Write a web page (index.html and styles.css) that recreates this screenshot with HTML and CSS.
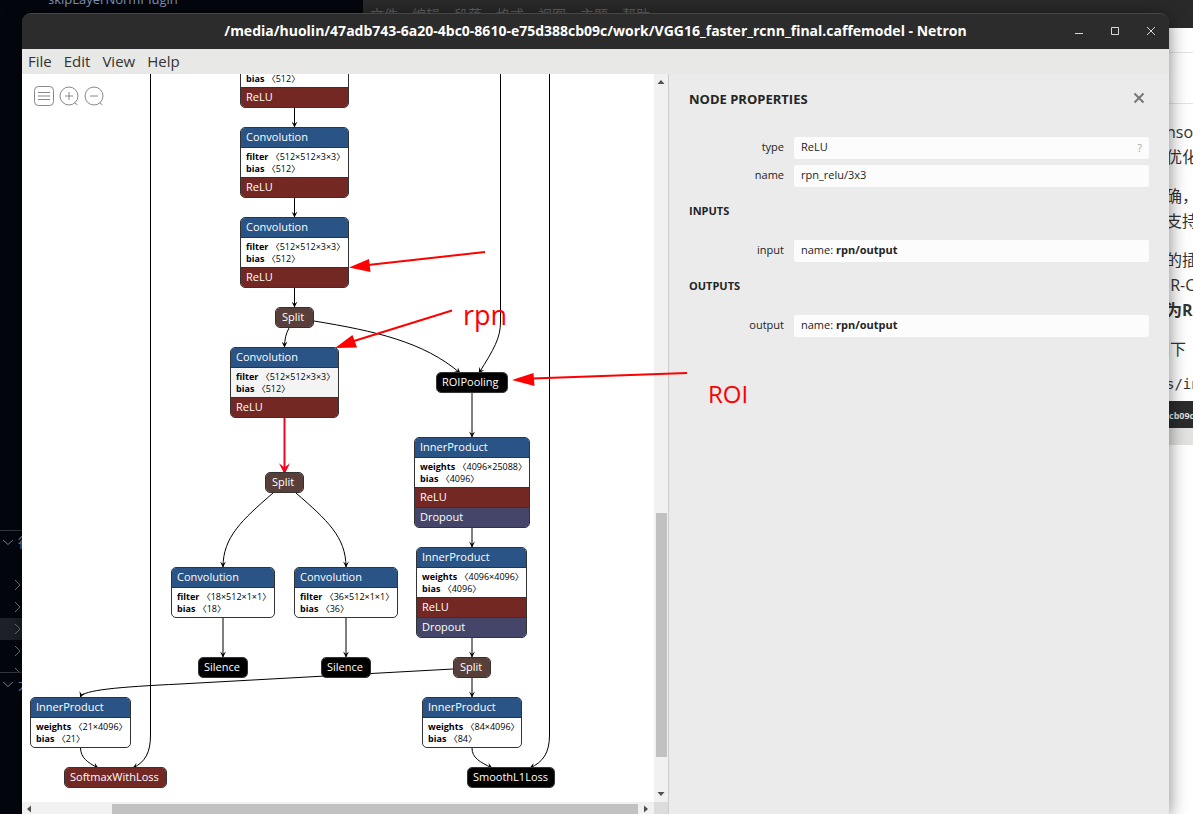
FILE: index.html
```html
<!DOCTYPE html>
<html lang="en">
<head>
<meta charset="utf-8">
<title>VGG16_faster_rcnn_final.caffemodel - Netron</title>
<link rel="stylesheet" href="styles.css">
</head>
<body>
<div class="desktop">
  <div class="editor">
    <div class="editor-file">skipLayerNormPlugin</div>
    <div class="editor-tree">
      <div class="tree-head"><svg class="chev" viewBox="0 0 12 12"><path d="M1 4l5 4.500L11 4"/></svg>行</div>
      <div class="tree-gap"></div>
      <div class="tree-row"><svg class="chev" viewBox="0 0 12 12"><path d="M5 1l5 5-5 5"/></svg></div>
      <div class="tree-row"><svg class="chev" viewBox="0 0 12 12"><path d="M5 1l5 5-5 5"/></svg></div>
      <div class="tree-row tree-row-active"><svg class="chev" viewBox="0 0 12 12"><path d="M5 1l5 5-5 5"/></svg></div>
      <div class="tree-row"><svg class="chev" viewBox="0 0 12 12"><path d="M5 1l5 5-5 5"/></svg></div>
      <div class="tree-row tree-row-cut"><svg class="chev" viewBox="0 0 12 12"><path d="M5 1l5 5-5 5"/></svg></div>
      <div class="tree-head"><svg class="chev" viewBox="0 0 12 12"><path d="M1 4l5 4.500L11 4"/></svg>大</div>
    </div>
  </div>

  <div class="notes-bar" lang="zh">
    <span>文件</span><span>编辑</span><span>段落</span><span>格式</span><span>视图</span><span>主题</span><span>帮助</span>
  </div>
  <div class="notes" lang="zh">
    <div class="notes-tabs"></div>
    <div class="notes-tools"></div>
    <div class="notes-text">
      <p>nso<br>优化</p>
      <p>确，<br>支持</p>
      <p>的插<br>&nbsp;R-C<br><b>为R</b></p>
      <p class="outdent">如下</p>
      <p class="code">s/in</p>
    </div>
    <div class="notes-image"><b>cb09c</b></div>
  </div>

  <main class="window">
    <header class="titlebar">
      <h1>/media/huolin/47adb743-6a20-4bc0-8610-e75d388cb09c/work/VGG16_faster_rcnn_final.caffemodel - Netron</h1>
      <div class="window-buttons">
        <button aria-label="Minimize"><svg viewBox="0 0 10 10"><path d="M1 7.500h8"/></svg></button>
        <button aria-label="Maximize"><svg viewBox="0 0 10 10"><path d="M1.500 1.500h7v7h-7z"/></svg></button>
        <button aria-label="Close"><svg viewBox="0 0 10 10"><path d="M1 1l8 8M9 1l-8 8"/></svg></button>
      </div>
    </header>
    <nav class="menubar">
      <button>File</button><button>Edit</button><button>View</button><button>Help</button>
    </nav>
    <div class="content">
      <section class="viewer">
        <div class="canvas">
          <svg class="edges" viewBox="22 74 633 728" width="633" height="728">
            <defs>
              <marker id="tip" viewBox="0 0 10 10" refX="9" refY="5" markerWidth="8" markerHeight="6" markerUnits="userSpaceOnUse" orient="auto"><path d="M0 0L10 5L0 10L4 5z"/></marker>
              <marker id="tip-red" viewBox="0 0 10 10" refX="8" refY="5" markerWidth="12" markerHeight="11" markerUnits="userSpaceOnUse" orient="auto"><path d="M0 0L10 5L0 10L4 5z" fill="#f2041c"/></marker>
            </defs>
            <g class="edge">
              <path d="M294.500 108V127"/>
              <path d="M294.500 198V217"/>
              <path d="M294.500 288V307"/>
              <path d="M289 328Q284.500 336 284.500 347"/>
              <path d="M314 321C375 331 424 342 460 373"/>
              <path d="M500.500 74V322C500.500 338 494 349 479 373"/>
              <path d="M472 393V437"/>
              <path d="M472 528V547"/>
              <path d="M472 638V657"/>
              <path d="M472 678V697"/>
              <path d="M273 493C242 520 223 537 223 567"/>
              <path d="M296 493C327 520 346 537 346 567"/>
              <path d="M223 618V657"/>
              <path d="M346 618V657"/>
              <path d="M453 669L180 684C118 687 83 690 80.500 697"/>
              <path d="M80.500 748C81 758 87 762 98 768"/>
              <path d="M150.500 74V735C150.500 753 145 762 133 768"/>
              <path d="M472 748C472 758 480 762 492 768"/>
              <path d="M549.500 74V735C549.500 753 543 762 530 768"/>
            </g>
            <path class="edge-selected" d="M284.500 418V472"/>
          </svg>

          <div class="node" style="left:218px;top:-37px;width:109px">
            <div class="op layer">Convolution</div>
            <div class="attrs"><p><b>filter</b> <i>〈</i>512×512×3×3<i>〉</i></p><p><b>bias</b> <i>〈</i>512<i>〉</i></p></div>
            <div class="op relu">ReLU</div>
          </div>
          <div class="node" style="left:218px;top:53px;width:109px">
            <div class="op layer">Convolution</div>
            <div class="attrs"><p><b>filter</b> <i>〈</i>512×512×3×3<i>〉</i></p><p><b>bias</b> <i>〈</i>512<i>〉</i></p></div>
            <div class="op relu">ReLU</div>
          </div>
          <div class="node" style="left:218px;top:143px;width:109px">
            <div class="op layer">Convolution</div>
            <div class="attrs"><p><b>filter</b> <i>〈</i>512×512×3×3<i>〉</i></p><p><b>bias</b> <i>〈</i>512<i>〉</i></p></div>
            <div class="op relu">ReLU</div>
          </div>
          <div class="node" style="left:253px;top:233px;width:39px"><div class="op split">Split</div></div>
          <div class="node" style="left:208px;top:273px;width:109px">
            <div class="op layer">Convolution</div>
            <div class="attrs attrs-hover"><p><b>filter</b> <i>〈</i>512×512×3×3<i>〉</i></p><p><b>bias</b> <i>〈</i>512<i>〉</i></p></div>
            <div class="op relu">ReLU</div>
          </div>
          <div class="node" style="left:414px;top:298px;width:72px"><div class="op plain">ROIPooling</div></div>
          <div class="node" style="left:243px;top:398px;width:39px"><div class="op split">Split</div></div>
          <div class="node" style="left:392px;top:363px;width:116px">
            <div class="op layer">InnerProduct</div>
            <div class="attrs"><p><b>weights</b> <i>〈</i>4096×25088<i>〉</i></p><p><b>bias</b> <i>〈</i>4096<i>〉</i></p></div>
            <div class="op relu">ReLU</div>
            <div class="op dropout">Dropout</div>
          </div>
          <div class="node" style="left:394px;top:473px;width:111px">
            <div class="op layer">InnerProduct</div>
            <div class="attrs"><p><b>weights</b> <i>〈</i>4096×4096<i>〉</i></p><p><b>bias</b> <i>〈</i>4096<i>〉</i></p></div>
            <div class="op relu">ReLU</div>
            <div class="op dropout">Dropout</div>
          </div>
          <div class="node" style="left:149px;top:493px;width:104px">
            <div class="op layer">Convolution</div>
            <div class="attrs"><p><b>filter</b> <i>〈</i>18×512×1×1<i>〉</i></p><p><b>bias</b> <i>〈</i>18<i>〉</i></p></div>
          </div>
          <div class="node" style="left:272px;top:493px;width:104px">
            <div class="op layer">Convolution</div>
            <div class="attrs"><p><b>filter</b> <i>〈</i>36×512×1×1<i>〉</i></p><p><b>bias</b> <i>〈</i>36<i>〉</i></p></div>
          </div>
          <div class="node" style="left:176px;top:583px;width:50px"><div class="op plain">Silence</div></div>
          <div class="node" style="left:299px;top:583px;width:50px"><div class="op plain">Silence</div></div>
          <div class="node" style="left:431px;top:583px;width:38px"><div class="op split">Split</div></div>
          <div class="node" style="left:8px;top:623px;width:101px">
            <div class="op layer">InnerProduct</div>
            <div class="attrs"><p><b>weights</b> <i>〈</i>21×4096<i>〉</i></p><p><b>bias</b> <i>〈</i>21<i>〉</i></p></div>
          </div>
          <div class="node" style="left:400px;top:623px;width:100px">
            <div class="op layer">InnerProduct</div>
            <div class="attrs"><p><b>weights</b> <i>〈</i>84×4096<i>〉</i></p><p><b>bias</b> <i>〈</i>84<i>〉</i></p></div>
          </div>
          <div class="node" style="left:42px;top:693px;width:103px"><div class="op relu">SoftmaxWithLoss</div></div>
          <div class="node" style="left:445px;top:693px;width:88px"><div class="op plain">SmoothL1Loss</div></div>

          <div class="toolbar">
            <button aria-label="Model properties"><svg viewBox="0 0 20 20"><rect x="0.500" y="0.500" width="19" height="19" rx="4"/><path d="M4 6.500h12M4 10h12M4 13.500h12"/></svg></button>
            <button aria-label="Zoom in"><svg viewBox="0 0 20 20"><circle cx="10" cy="10" r="9"/><path d="M6 10h8M10 6v8M15.500 16.500l3 2.500"/></svg></button>
            <button aria-label="Zoom out"><svg viewBox="0 0 20 20"><circle cx="10" cy="10" r="9"/><path d="M6 10h8M15.500 16.500l3 2.500"/></svg></button>
          </div>
        </div>
        <div class="scroll scroll-v">
          <svg viewBox="0 0 8 8"><path d="M0.500 6L4 2l3.500 4z"/></svg>
          <div class="track"><div class="thumb"></div></div>
          <svg viewBox="0 0 8 8"><path d="M0.500 2L4 6l3.500-4z"/></svg>
        </div>
        <div class="scroll scroll-h">
          <svg viewBox="0 0 8 8"><path d="M6 0.500L2 4l4 3.500z"/></svg>
          <div class="track"><div class="thumb"></div></div>
          <svg viewBox="0 0 8 8"><path d="M2 0.500L6 4l-4 3.500z"/></svg>
        </div>
        <div class="scroll-corner"></div>
      </section>

      <aside class="sidebar">
        <div class="sidebar-head">
          <h2>NODE PROPERTIES</h2>
          <button aria-label="Close panel"><svg viewBox="0 0 12 12"><path d="M1.500 1.500l9 9M10.500 1.500l-9 9"/></svg></button>
        </div>
        <div class="field"><label for="f-type">type</label><div class="value"><input id="f-type" value="ReLU" readonly><button aria-label="Help">?</button></div></div>
        <div class="field"><label for="f-name">name</label><div class="value"><input id="f-name" value="rpn_relu/3x3" readonly></div></div>
        <h3>INPUTS</h3>
        <div class="field"><label for="f-in">input</label><output class="value" id="f-in">name:&nbsp;<b>rpn/output</b></output></div>
        <h3>OUTPUTS</h3>
        <div class="field"><label for="f-out">output</label><output class="value" id="f-out">name:&nbsp;<b>rpn/output</b></output></div>
      </aside>
    </div>
    <svg class="marks" viewBox="22 13 800 600" width="800" height="600">
      <path class="mark-line" d="M485 252L368 265M452 310.500L354 341M687 373L532 378.500"/>
      <path class="mark-head" d="M349 267.500L369 259L370.500 272zM335 348L352.500 335L357 347.500zM512 380L533.500 373L534.500 386z"/>
      <text x="463" y="325" font-size="27">rpn</text>
      <text x="708" y="403" font-size="24">ROI</text>
    </svg>
  </main>
</div>
</body>
</html>
```

FILE: styles.css
```css
* { box-sizing: border-box; margin: 0; padding: 0; }

body {
  font-family: "Open Sans", "Noto Sans", "Noto Sans CJK SC", sans-serif;
  color: #242424;
}

button {
  border: 0;
  background: none;
  font: inherit;
  color: inherit;
}

svg { display: block; }

.desktop {
  position: relative;
  height: 100vh;
  overflow: hidden;
  background: #03060c;
}

/* code editor behind the window */
.editor {
  height: 100%;
  color: #8495b3;
  font-size: 13px;
}
.editor-file {
  height: 7px;
  margin-left: 48px;
  display: flex;
  align-items: flex-end;
  line-height: 16px;
}
.editor-tree { padding-top: 523px; }
.tree-head {
  display: flex;
  align-items: center;
  gap: 4px;
  height: 22px;
  padding-left: 2px;
  border-top: 1px solid #33383f;
}
.tree-gap { height: 22px; }
.tree-row {
  height: 22px;
  padding: 5px 0 0 10px;
}
.tree-row-active { background: #1e2128; }
.tree-row-cut { height: 10px; overflow: hidden; }
.chev {
  flex: none;
  width: 12px;
  height: 12px;
  fill: none;
  stroke: #707883;
}

/* notes application behind the window */
.notes-bar {
  position: absolute;
  left: 363px;
  right: 0;
  top: 0;
  display: flex;
  gap: 14px;
  height: 28px;
  padding: 5px 7px 0;
  background: #2a2a2a;
  color: #626262;
  font-size: 14px;
  line-height: 20px;
}
.notes {
  position: absolute;
  right: 0;
  top: 28px;
  bottom: 0;
  width: 36px;
  overflow: hidden;
  background: #fff;
  color: #333;
}
.notes-tabs { height: 25px; border-bottom: 1px solid #e4e4e4; }
.notes-tools { height: 51px; border-bottom: 1px solid #e4e4e4; }
.notes-text {
  padding: 16px 0 0 9px;
  font-size: 16px;
  line-height: 25px;
  white-space: nowrap;
}
.notes-text p { margin-bottom: 14px; }
.notes-text .outdent { margin-left: -12px; margin-bottom: 10px; }
.notes-text .code {
  margin-bottom: 4px;
  font-family: "DejaVu Sans Mono", monospace;
  font-size: 14px;
}
.notes-image {
  height: 44px;
  padding: 6px 0 0 12px;
  border-bottom: 17px solid #e2e2e0;
  background: #2c2c2c;
  color: #ddd;
  font-size: 9px;
  line-height: 18px;
}

/* application window */
.window {
  position: absolute;
  left: 22px;
  right: 24px;
  top: 13px;
  bottom: 0;
  display: flex;
  flex-direction: column;
  border-radius: 9px 9px 0 0;
  box-shadow: 0 2px 18px rgba(0, 0, 0, 0.5);
}
.titlebar {
  display: grid;
  grid-template-columns: 95px 1fr 95px;
  align-items: center;
  height: 36px;
  border-top: 1px solid #464646;
  border-radius: 9px 9px 0 0;
  background: #2c2c2c;
  color: #fff;
}
.titlebar h1 {
  grid-column: 2;
  text-align: center;
  white-space: nowrap;
  font-size: 14px;
  line-height: 18px;
  padding-bottom: 2px;
}
.window-buttons { display: flex; gap: 26px; padding-bottom: 2px; }
.window-buttons svg {
  width: 10px;
  height: 10px;
  fill: none;
  stroke: #d8d8d8;
}
.menubar {
  display: flex;
  align-items: flex-start;
  gap: 12px;
  height: 25px;
  padding-left: 6px;
  background: #e8e8e6;
  color: #333;
  font-size: 15px;
  line-height: 24px;
}
.content { flex: 1; min-height: 0; display: flex; }

.viewer {
  flex: 1;
  min-width: 0;
  display: grid;
  grid-template-columns: 1fr 14px;
  grid-template-rows: 1fr 12px;
}
.canvas { position: relative; overflow: hidden; background: #fff; }
.edges { position: absolute; left: 0; top: 0; }
.edge { fill: none; stroke: #000; }
.edge path { marker-end: url(#tip); }
.edge-selected {
  fill: none;
  stroke: #f2041c;
  stroke-width: 2;
  marker-end: url(#tip-red);
}

.node {
  position: absolute;
  overflow: hidden;
  border: 1px solid #333;
  border-radius: 5px;
  background: #fff;
}
.node > * + * { border-top: 1px solid #333; }
.op {
  box-sizing: content-box;
  height: 19px;
  padding-left: 5px;
  color: #fff;
  font-size: 11px;
  line-height: 18px;
  white-space: nowrap;
}
.layer { background: #2a5485; }
.relu { background: #732824; }
.dropout { background: #454569; }
.split { background: #593f3a; padding-left: 6px; }
.plain { background: #000; }
.attrs {
  height: 30px;
  padding: 3px 0 0 5px;
  color: #000;
  font-size: 9px;
  line-height: 12px;
  white-space: nowrap;
}
.attrs-hover { background: #f4f4f4; }
.attrs i { font-family: "Noto Sans CJK SC", sans-serif; font-style: normal; }

.toolbar {
  position: absolute;
  left: 12px;
  top: 12px;
  display: flex;
  gap: 5px;
}
.toolbar svg {
  width: 20px;
  height: 20px;
  fill: none;
  stroke: #888;
}

.scroll { display: flex; align-items: center; background: #f1f1f1; }
.scroll svg { flex: none; width: 8px; height: 8px; fill: #505050; }
.scroll .track { flex: 1; display: flex; }
.scroll .thumb { background: #c1c1c1; }
.scroll-v { flex-direction: column; gap: 4px; padding: 4px 0; }
.scroll-v .track { flex-direction: column; justify-content: flex-end; }
.scroll-v .thumb { width: 11px; height: 35%; margin-bottom: 29px; }
.scroll-h { gap: 4px; padding: 2px 4px 0 3px; }
.scroll-h .track { align-self: stretch; justify-content: flex-end; }
.scroll-h .thumb { width: 87.5%; }
.scroll-corner { background: #dcdcdc; }

.sidebar {
  width: 501px;
  padding: 14px 20px;
  border-left: 1px solid #ccc;
  background: #ebebeb;
  font-size: 11px;
  line-height: 20px;
}
.sidebar-head {
  display: flex;
  justify-content: space-between;
  align-items: center;
  height: 22px;
  margin-bottom: 27px;
}
.sidebar-head h2 { font-size: 13px; }
.sidebar-head svg {
  width: 12px;
  height: 12px;
  margin: 0 4px 2px 0;
  fill: none;
  stroke: #777;
  stroke-width: 2;
}
.sidebar h3 { margin: 14px 0 19px; font-size: 11px; }
.field { display: flex; gap: 10px; margin-bottom: 6px; }
.field label { width: 95px; text-align: right; }
.value {
  flex: 1;
  display: flex;
  height: 22px;
  padding: 0 7px;
  border-radius: 2px;
  background: #fcfcfc;
}
.value input {
  flex: 1;
  min-width: 0;
  height: 20px;
  border: 0;
  background: none;
  font: inherit;
  color: inherit;
}
.value button { line-height: 20px; color: #aaa; }

/* hand-drawn notes over the window */
.marks {
  position: absolute;
  left: 0;
  top: 0;
  pointer-events: none;
}
.mark-line { fill: none; stroke: #f00; stroke-width: 2; }
.mark-head { fill: #f00; }
.marks text { fill: #f00; }
```
